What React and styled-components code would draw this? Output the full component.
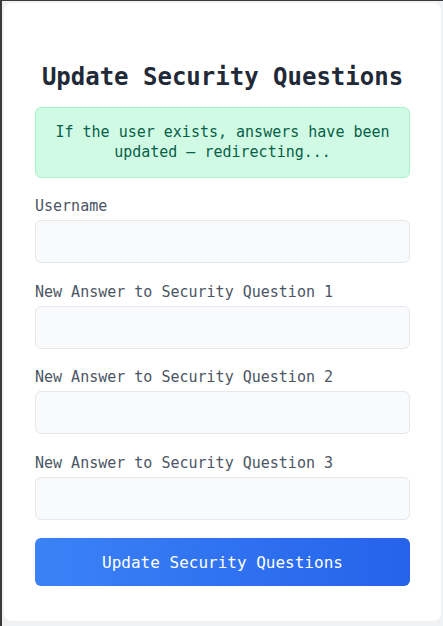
import React from 'react';
import styled, { createGlobalStyle } from 'styled-components';

const GlobalStyle = createGlobalStyle`
  * { box-sizing: border-box; }
  html, body { margin: 0; padding: 0; }
  body {
    font-family: "DejaVu Sans Mono", "Liberation Mono", monospace;
    background: #f1f2f4;
  }
`;

const Frame = styled.div`
  min-height: 626px;
  border-top: 1px solid #3a3a3a;
  border-left: 2px solid #3a3a3a;
  padding: 2px 2px 5px 2px;
  background: #f1f2f4;
`;

const Card = styled.div`
  background: #ffffff;
  border-radius: 8px;
  padding: 58px 31px 35px 31px;
  display: flex;
  flex-direction: column;
`;

const Title = styled.h1`
  margin: 0 0 14px 0;
  text-align: center;
  font-size: 24px;
  line-height: 32px;
  font-weight: 700;
  color: #1f2937;
`;

const Notice = styled.div`
  background: #d1fae5;
  border: 1px solid #a7f3d0;
  border-radius: 6px;
  padding: 15px 12px;
  text-align: center;
  font-size: 15px;
  line-height: 19.5px;
  color: #065f46;
  margin-bottom: 18px;
`;

const Form = styled.form`
  display: flex;
  flex-direction: column;
  gap: 18.5px;
`;

const Field = styled.div`
  display: flex;
  flex-direction: column;
  gap: 4px;
`;

const Label = styled.label`
  font-size: 15px;
  line-height: 20px;
  color: #4b5563;
`;

const Input = styled.input`
  height: 43px;
  width: 100%;
  background: #f9fafb;
  border: 1px solid #e5e7eb;
  border-radius: 6px;
  padding: 0 12px;
  font-family: inherit;
  font-size: 15px;
  outline: none;
`;

const Button = styled.button`
  height: 48px;
  width: 100%;
  border: none;
  border-radius: 6px;
  background: linear-gradient(90deg, #3b82f6 0%, #2563eb 100%);
  color: #ffffff;
  font-family: inherit;
  font-size: 16px;
  cursor: pointer;
`;

const fields = [
  'Username',
  'New Answer to Security Question 1',
  'New Answer to Security Question 2',
  'New Answer to Security Question 3',
];

export default function App() {
  return (
    <>
      <GlobalStyle />
      <Frame>
        <Card>
          <Title>Update Security Questions</Title>
          <Notice>
            If the user exists, answers have been
            <br />
            updated — redirecting...
          </Notice>
          <Form onSubmit={(e) => e.preventDefault()}>
            {fields.map((f) => (
              <Field key={f}>
                <Label>{f}</Label>
                <Input type="text" />
              </Field>
            ))}
            <Button type="submit">Update Security Questions</Button>
          </Form>
        </Card>
      </Frame>
    </>
  );
}
